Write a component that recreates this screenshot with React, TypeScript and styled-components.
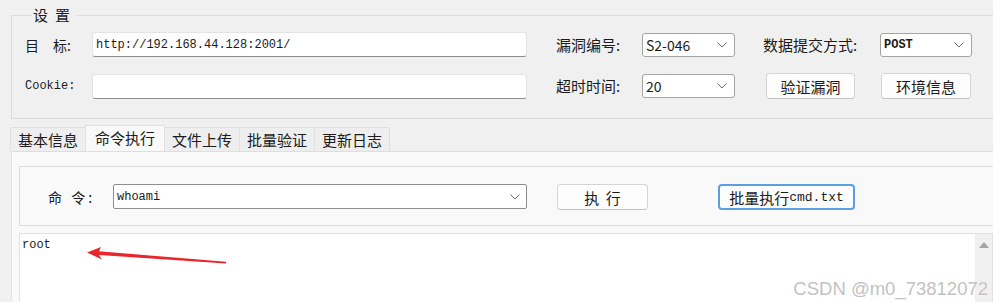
import React from "react";
import styled, { createGlobalStyle } from "styled-components";

const CJK = `"Noto Sans CJK SC", "Noto Sans", sans-serif`;
const MONO = `"Liberation Mono", "DejaVu Sans Mono", "Noto Sans CJK SC", monospace`;

const Global = createGlobalStyle`
  html, body { margin: 0; padding: 0; background: #f0f0f0; }
  #root { width: 993px; height: 302px; }
`;

const Page = styled.div`
  position: relative;
  width: 993px;
  height: 302px;
  overflow: hidden;
  background: #f0f0f0;
  padding-top: 6px;
  box-sizing: border-box;
  display: flex;
  flex-direction: column;
  font-family: ${CJK};
  color: #1b1b1b;
`;

const Settings = styled.fieldset`
  margin: 0 -6px 0 11px;
  padding: 8px 0 19px 13px;
  border: 1px solid #dadada;
  min-width: 0;
`;

const Legend = styled.legend`
  margin-left: 7px;
  padding: 0 0 0 1px;
  font-size: 15px;
  line-height: 18px;
  letter-spacing: 7px;
`;

const FormGrid = styled.div`
  display: grid;
  grid-template-columns: 67px 464px 86px 121px 117px 92px;
  row-gap: 16px;
  align-items: center;
`;

const Label = styled.span<{ $mono?: boolean; $size?: number }>`
  font-family: ${(p) => (p.$mono ? MONO : CJK)};
  font-size: ${(p) => p.$size ?? 15}px;
  line-height: 20px;
  white-space: pre;
`;

const TextField = styled.div`
  width: 435px;
  height: 25px;
  box-sizing: border-box;
  background: #fff;
  border: 1px solid #e4e4e4;
  border-bottom-color: #8d8d8d;
  border-radius: 3px;
  padding-left: 3px;
  display: flex;
  align-items: center;
  font-family: ${MONO};
  font-size: 12px;
`;

const SelectBox = styled.div<{ $w: number; $mono?: boolean }>`
  width: ${(p) => p.$w}px;
  height: 24px;
  box-sizing: border-box;
  background: #fff;
  border: 1px solid #a4a4a4;
  border-radius: 3px;
  padding: 0 7px 0 3px;
  display: flex;
  align-items: center;
  justify-content: space-between;
  font-family: ${(p) => (p.$mono ? MONO : CJK)};
  font-size: ${(p) => (p.$mono ? 12 : 14)}px;
  font-weight: ${(p) => (p.$mono ? 700 : 400)};
`;

const Button = styled.div<{ $w: number; $ml?: number; $focus?: boolean }>`
  width: ${(p) => p.$w}px;
  height: 26px;
  margin-left: ${(p) => p.$ml ?? 0}px;
  box-sizing: border-box;
  background: #fdfdfd;
  border: ${(p) => (p.$focus ? "2px solid #5b9fe0" : "1px solid #d4d4d4")};
  border-bottom-color: ${(p) => (p.$focus ? "#5b9fe0" : "#c2c2c2")};
  border-radius: 4px;
  display: flex;
  align-items: center;
  justify-content: center;
  font-size: 15px;
  white-space: pre;
`;

const MonoPart = styled.span`
  font-family: ${MONO};
  font-size: 13px;
`;

const TabBar = styled.div`
  display: flex;
  align-items: flex-end;
  margin: 6px 0 0 11px;
  height: 26px;
`;

const Tab = styled.div<{ $active?: boolean }>`
  height: ${(p) => (p.$active ? 26 : 24)}px;
  padding: ${(p) => (p.$active ? "0 9px 2px" : "0 7px")};
  box-sizing: border-box;
  display: flex;
  align-items: center;
  font-size: 15px;
  background: ${(p) => (p.$active ? "#f9f9f9" : "#eeeeee")};
  border: 1px solid #e0e0e0;
  border-bottom: none;
  margin-left: -1px;
`;

const Panel = styled.div`
  flex: 1;
  min-height: 0;
  margin: 0 -8px 0 11px;
  padding: 14px 0 0 7px;
  background: #f9f9f9;
  border-top: 1px solid #dedede;
  border-left: 1px solid #e2e2e2;
  display: flex;
  flex-direction: column;
`;

const CmdGroup = styled.div`
  height: 60px;
  box-sizing: border-box;
  border: 1px solid #dcdcdc;
  border-right: none;
  padding: 17px 0 0 28px;
  display: flex;
  align-items: flex-start;
`;

const CmdLabel = styled.span`
  width: 65px;
  font-size: 14px;
  line-height: 26px;
  letter-spacing: 3px;
  white-space: pre;
`;

const Combo = styled.div`
  width: 414px;
  height: 25px;
  box-sizing: border-box;
  background: #fff;
  border: 1px solid #8e8e8e;
  border-radius: 2px;
  padding: 0 6px 0 3px;
  display: flex;
  align-items: center;
  justify-content: space-between;
  font-family: ${MONO};
  font-size: 12px;
`;

const Output = styled.div`
  flex: 1;
  margin: 7px 8px 0 0;
  display: flex;
  background: #fff;
  border: 1px solid #e2e2e2;
  border-bottom: none;
`;

const OutputText = styled.div`
  flex: 1;
  padding: 4px 2px;
  font-family: ${MONO};
  font-size: 12px;
  line-height: 14px;
`;

const Scrollbar = styled.div`
  width: 17px;
  background: #f0f0f0;
  display: flex;
  justify-content: center;
  padding-top: 8px;
  box-sizing: border-box;
`;

const UpArrow = styled.div`
  width: 0;
  height: 0;
  border-left: 5px solid transparent;
  border-right: 5px solid transparent;
  border-bottom: 6px solid #a5a5a5;
`;

const Overlay = styled.svg`
  position: absolute;
  left: 0;
  top: 0;
  pointer-events: none;
`;

const Watermark = styled.div`
  position: absolute;
  right: 5px;
  bottom: 2px;
  font-family: "Liberation Sans", Arial, sans-serif;
  font-size: 18.5px;
  color: #c2c2c2;
  text-shadow: 0 0 1px #fff;
`;

const Chevron = () => (
  <svg width="10" height="6" viewBox="0 0 10 6">
    <polyline points="0.5,0.5 5,5 9.5,0.5" fill="none" stroke="#6a6a6a" strokeWidth="1" />
  </svg>
);

export default function App() {
  return (
    <>
      <Global />
      <Page>
        <Settings>
          <Legend>设置</Legend>
          <FormGrid>
            <Label $size={14}>{"目　标:"}</Label>
            <TextField>http://192.168.44.128:2001/</TextField>
            <Label>漏洞编号:</Label>
            <SelectBox $w={93}>
              <span>S2-046</span>
              <Chevron />
            </SelectBox>
            <Label>数据提交方式:</Label>
            <SelectBox $w={92} $mono>
              <span>POST</span>
              <Chevron />
            </SelectBox>

            <Label $mono $size={12}>Cookie:</Label>
            <TextField />
            <Label>超时时间:</Label>
            <SelectBox $w={93}>
              <span>20</span>
              <Chevron />
            </SelectBox>
            <Button $w={89} $ml={3}>验证漏洞</Button>
            <Button $w={90} $ml={1}>环境信息</Button>
          </FormGrid>
        </Settings>

        <TabBar>
          <Tab>基本信息</Tab>
          <Tab $active>命令执行</Tab>
          <Tab>文件上传</Tab>
          <Tab>批量验证</Tab>
          <Tab>更新日志</Tab>
        </TabBar>

        <Panel>
          <CmdGroup>
            <CmdLabel>{"命 令:"}</CmdLabel>
            <Combo>
              <span>whoami</span>
              <Chevron />
            </Combo>
            <Button $w={91} $ml={30}>{"执  行"}</Button>
            <Button $w={137} $ml={70} $focus>
              批量执行<MonoPart>cmd.txt</MonoPart>
            </Button>
          </CmdGroup>
          <Output>
            <OutputText>root</OutputText>
            <Scrollbar>
              <UpArrow />
            </Scrollbar>
          </Output>
        </Panel>

        <Overlay width="993" height="302" viewBox="0 0 993 302">
          <polygon
            points="87,252.5 101,247 99,251.3 226,261.8 226,263.6 99,255 102,259.5"
            fill="#e8262b"
          />
        </Overlay>
        <Watermark>CSDN @m0_73812072</Watermark>
      </Page>
    </>
  );
}
